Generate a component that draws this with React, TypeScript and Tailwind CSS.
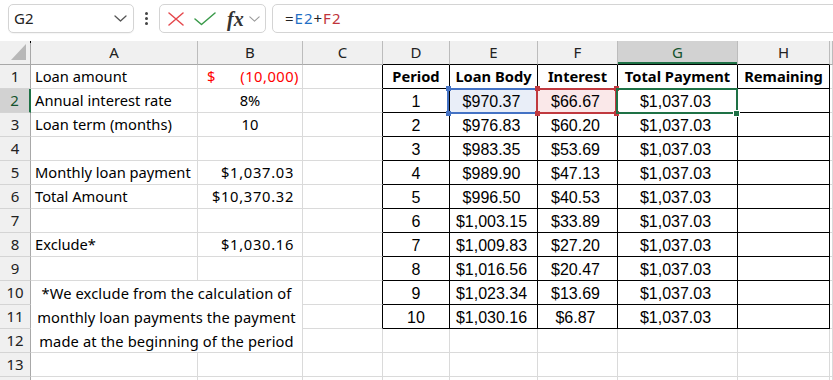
import React from "react";

const leftData: Record<number, [string, React.ReactNode, string]> = {
  1: ["Loan amount", "special", ""],
  2: ["Annual interest rate", "8%", "c"],
  3: ["Loan term (months)", "10", "c"],
  4: ["", "", ""],
  5: ["Monthly loan payment", "$1,037.03", "r"],
  6: ["Total Amount", "$10,370.32", "r"],
  7: ["", "", ""],
  8: ["Exclude*", "$1,030.16", "r"],
  9: ["", "", ""],
  13: ["", "", ""],
  14: ["", "", ""],
};

const tableRows: string[][] = [
  ["Period", "Loan Body", "Interest", "Total Payment", "Remaining"],
  ["1", "$970.37", "$66.67", "$1,037.03", ""],
  ["2", "$976.83", "$60.20", "$1,037.03", ""],
  ["3", "$983.35", "$53.69", "$1,037.03", ""],
  ["4", "$989.90", "$47.13", "$1,037.03", ""],
  ["5", "$996.50", "$40.53", "$1,037.03", ""],
  ["6", "$1,003.15", "$33.89", "$1,037.03", ""],
  ["7", "$1,009.83", "$27.20", "$1,037.03", ""],
  ["8", "$1,016.56", "$20.47", "$1,037.03", ""],
  ["9", "$1,023.34", "$13.69", "$1,037.03", ""],
  ["10", "$1,030.16", "$6.87", "$1,037.03", ""],
];

const cellBase =
  "border-r border-b border-[#dadada] overflow-hidden whitespace-nowrap leading-[23px] text-[14.7px] text-black";

function RowHeader({ n }: { n: number }) {
  const sel = n === 2;
  return (
    <div
      className={
        "border-b border-[#d4d4d4] text-center leading-[23px] text-[15px] " +
        (sel
          ? "bg-[#d2d2d2] border-r-2 border-r-[#1e7145] text-[#14532d]"
          : "bg-[#f0f0f0] border-r border-r-[#a8a8a8] text-[#222]")
      }
    >
      {n < 14 ? n : ""}
    </div>
  );
}

function Chevron({ color, w = 13, h = 7 }: { color: string; w?: number; h?: number }) {
  return (
    <svg width={w} height={h} viewBox="0 0 13 7" fill="none">
      <path d="M1 1 L6.5 6 L12 1" stroke={color} strokeWidth="1.3" strokeLinecap="round" strokeLinejoin="round" />
    </svg>
  );
}

export default function App() {
  const letters = ["A", "B", "C", "D", "E", "F", "G", "H", ""];
  const rows: React.ReactNode[] = [];

  for (let r = 1; r <= 14; r++) {
    rows.push(<RowHeader key={"rh" + r} n={r} />);
    if (r >= 10 && r <= 12) {
      if (r === 10) {
        rows.push(
          <div
            key="merged"
            className="col-span-2 row-span-3 border-r border-b border-[#dadada] text-center text-[14.7px] leading-[24px] tracking-[0.12px] text-black"
          >
            <div>*We exclude from the calculation of</div>
            <div>monthly loan payments the payment</div>
            <div>made at the beginning of the period</div>
          </div>
        );
      }
    } else {
      const d = leftData[r];
      rows.push(
        <div key={"a" + r} className={cellBase + " pl-[4px]"}>
          {d[0]}
        </div>
      );
      if (d[1] === "special") {
        rows.push(
          <div key={"b" + r} className={cellBase + " flex justify-between text-[#ff0000]"}>
            <span className="pl-[9px] text-[#ff0000]">$</span>
            <span className="pr-[3px] tracking-[0.5px] text-[#ff0000]">(10,000)</span>
          </div>
        );
      } else {
        rows.push(
          <div
            key={"b" + r}
            className={
              cellBase +
              (d[2] === "c"
                ? " text-center"
                : d[2] === "r"
                ? " text-right pr-[8px] tracking-[0.7px]"
                : "")
            }
          >
            {d[1]}
          </div>
        );
      }
    }
    // C
    rows.push(
      <div key={"c" + r} className={cellBase + (r <= 11 ? " border-r-black" : "")} />
    );
    // D..H
    for (let c = 0; c < 5; c++) {
      if (r <= 11) {
        const v = tableRows[r - 1][c];
        const hdr = r === 1;
        let extra = "";
        if (r === 2 && c === 1) extra = " bg-[#e9eef8]";
        if (r === 2 && c === 2) extra = " bg-[#fae8e9]";
        rows.push(
          <div
            key={"t" + r + "-" + c}
            className={
              "border-r border-b border-black overflow-hidden whitespace-nowrap text-center text-black " +
              (hdr
                ? "font-bold text-[14.7px] leading-[23px]"
                : "font-['Liberation_Sans',Arial,sans-serif] text-[16px] leading-[23px] pt-[1px]" +
                  (c > 0 ? " pr-[4px]" : "")) +
              extra
            }
          >
            {v}
          </div>
        );
      } else {
        rows.push(<div key={"t" + r + "-" + c} className={cellBase} />);
      }
    }
    // I
    rows.push(<div key={"i" + r} className={cellBase} />);
  }

  return (
    <div className="relative w-[833px] h-[380px] overflow-hidden bg-white font-['Noto_Sans',sans-serif]">
      {/* formula bar */}
      <div className="h-[41px] flex items-start pt-[4px] pl-[8px]">
        <div className="shrink-0 w-[126px] h-[29px] rounded-[5px] border border-[#d4d4d4] bg-white flex items-center justify-between pl-[5px] pr-[6px] shadow-[0_1px_1px_rgba(0,0,0,0.04)]">
          <span className="text-[15px] text-[#222]">G2</span>
          <Chevron color="#555" />
        </div>
        <div className="shrink-0 w-[25px] h-[29px] flex flex-col items-center justify-center gap-[2px]">
          <div className="w-[3px] h-[3px] rounded-full bg-[#444]" />
          <div className="w-[3px] h-[3px] rounded-full bg-[#444]" />
          <div className="w-[3px] h-[3px] rounded-full bg-[#444]" />
        </div>
        <div className="shrink-0 w-[107px] h-[29px] rounded-[5px] border border-[#d4d4d4] bg-white flex items-center pl-[8px]">
          <svg width="16" height="14" viewBox="0 0 16 14" fill="none" className="shrink-0">
            <path d="M1 1 L15 13 M15 1 L1 13" stroke="#e5484d" strokeWidth="1.5" strokeLinecap="round" />
          </svg>
          <svg width="22" height="14" viewBox="0 0 22 14" fill="none" className="ml-[10px] shrink-0">
            <path d="M1 7 L7.5 12.5 L21 1" stroke="#3a9a4a" strokeWidth="1.5" strokeLinecap="round" strokeLinejoin="round" />
          </svg>
          <span className="ml-[11px] font-['Liberation_Serif',serif] italic font-bold text-[20px] leading-none text-[#333]">
            fx
          </span>
          <span className="ml-[5px]">
            <Chevron color="#9a9a9a" w={11} h={6} />
          </span>
        </div>
        <div className="shrink-0 ml-[6px] w-[600px] h-[29px] rounded-[5px] border border-[#d4d4d4] bg-white flex items-center pl-[12px] text-[15px] tracking-[1px] text-[#222]">
          <span>=</span>
          <span className="text-[#1f6fc5]">E2</span>
          <span>+</span>
          <span className="text-[#c0343b]">F2</span>
        </div>
      </div>

      {/* sheet grid */}
      <div className="grid grid-cols-[31px_167px_105px_80px_67px_88px_80px_120px_92px_1fr] auto-rows-[24px]">
        {/* corner */}
        <div className="relative bg-[#f0f0f0] border-r border-b border-[#a8a8a8]">
          <div className="absolute right-[4px] bottom-[4px] w-0 h-0 border-l-[15px] border-l-transparent border-b-[16px] border-b-[#b8b8b8]" />
          <div className="absolute right-[-1px] top-0 w-[1px] h-[2px] bg-black" />
        </div>
        {letters.map((l, i) => {
          const inTable = i >= 3 && i <= 7;
          const sel = l === "G";
          return (
            <div
              key={"h" + i}
              className={
                "border-r border-r-[#bcbcbc] border-b text-center leading-[23px] text-[15px] " +
                (inTable ? "border-b-black " : "border-b-[#a8a8a8] ") +
                (sel
                  ? "bg-[#d2d2d2] text-[#14532d] shadow-[inset_0_-2px_0_#1e7145]"
                  : "bg-[#f0f0f0] text-[#222]")
              }
            >
              {l}
            </div>
          );
        })}
        {rows}
      </div>

      {/* reference highlights */}
      <div className="absolute left-[447px] top-[88px] w-[91px] h-[26px] border-2 border-[#4472c4]" />
      <div className="absolute left-[536px] top-[88px] w-[81px] h-[26px] border-2 border-[#c0393f]" />
      {/* blue handles */}
      <div className="absolute left-[446px] top-[86px] w-[5px] h-[5px] bg-[#4472c4]" />
      <div className="absolute left-[446px] top-[111px] w-[5px] h-[5px] bg-[#4472c4]" />
      {/* red handles */}
      <div className="absolute left-[535px] top-[86px] w-[5px] h-[5px] bg-[#c0393f]" />
      <div className="absolute left-[535px] top-[111px] w-[5px] h-[5px] bg-[#c0393f]" />
      <div className="absolute left-[614px] top-[86px] w-[5px] h-[5px] bg-[#c0393f]" />
      <div className="absolute left-[614px] top-[111px] w-[5px] h-[5px] bg-[#c0393f]" />
      {/* active cell */}
      <div className="absolute left-[616px] top-[88px] w-[122px] h-[26px] border-2 border-[#1e7145]" />
      <div className="absolute left-[734px] top-[111px] w-[5px] h-[5px] bg-[#1e7145] outline outline-1 outline-white" />
    </div>
  );
}
